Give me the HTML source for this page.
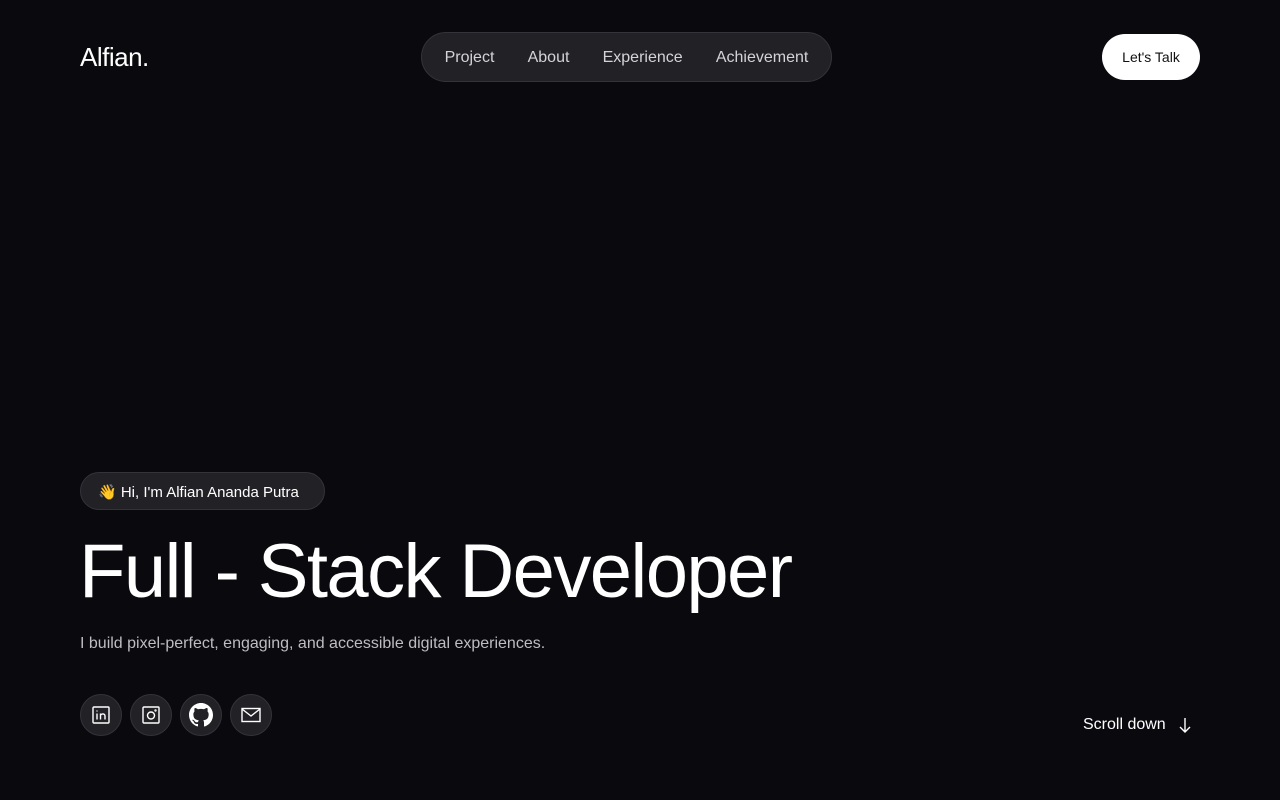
<!DOCTYPE html>
<html><head><meta charset="utf-8"><style>
*{margin:0;padding:0;box-sizing:border-box}
body{width:1280px;height:800px;background:#0a090e;font-family:"Liberation Sans",sans-serif;color:#fff;position:relative;overflow:hidden}
.logo{position:absolute;left:80px;top:42px;font-size:26px;letter-spacing:-0.5px}
.nav{position:absolute;left:421px;top:32px;width:411px;height:50px;border-radius:25px;background:#222126;border:1px solid #34333a;display:flex;align-items:center;justify-content:space-around;padding:2px 6px 0;font-size:16px;color:#d4d4d8}
.talk{position:absolute;left:1102px;top:34px;width:98px;height:46px;border-radius:23px;background:#fff;color:#111;font-size:14px;display:flex;align-items:center;justify-content:center}
.badge{position:absolute;left:80px;top:472px;width:245px;height:38px;border-radius:19px;background:#222126;border:1px solid #34333a;font-size:15px;display:flex;align-items:center;padding:2px 0 0 17px}
h1{position:absolute;left:79px;top:528px;font-size:76px;font-weight:400;letter-spacing:-1.6px;white-space:nowrap}
.sub{position:absolute;left:80px;top:635px;font-size:16px;color:#bdbdc2}
.icons{position:absolute;left:80px;top:694px;display:flex;gap:8px}
.icons div{width:42px;height:42px;border-radius:50%;background:#222126;border:1px solid #34333a;display:flex;align-items:center;justify-content:center}
.scroll{position:absolute;left:1083px;top:716px;font-size:16px;display:flex;align-items:center;gap:12px}
</style></head><body>
<div class="logo">Alfian.</div>
<div class="nav"><span>Project</span><span>About</span><span>Experience</span><span>Achievement</span></div>
<div class="talk">Let's Talk</div>
<div class="badge">👋 Hi, I'm Alfian Ananda Putra</div>
<h1>Full - Stack Developer</h1>
<div class="sub">I build pixel-perfect, engaging, and accessible digital experiences.</div>
<div class="icons">
<div><svg width="20" height="20" viewBox="0 0 20 20" fill="none" stroke="#fff" stroke-width="1.4"><rect x="2" y="2" width="16" height="16" rx="1"/><path d="M6 8.5v6M6 5.5v1M9.5 14.5v-6M9.5 11c0-2.5 4.5-3 4.5 0v3.5"/></svg></div>
<div><svg width="20" height="20" viewBox="0 0 20 20" fill="none" stroke="#fff" stroke-width="1.4"><rect x="2" y="2" width="16" height="16" rx="1"/><circle cx="10" cy="10.5" r="3.5"/><circle cx="14.5" cy="5.5" r=".5"/></svg></div>
<div><svg width="24" height="24" viewBox="0 0 16 16" fill="#fff"><path d="M8 0C3.58 0 0 3.58 0 8c0 3.54 2.29 6.53 5.47 7.59.4.07.55-.17.55-.38v-1.33c-2.23.48-2.7-1.07-2.7-1.07-.36-.92-.89-1.17-.89-1.17-.73-.5.06-.49.06-.49.8.06 1.23.83 1.23.83.71 1.22 1.87.87 2.33.66.07-.52.28-.87.5-1.07-1.78-.2-3.64-.89-3.64-3.95 0-.87.31-1.59.82-2.150-.08-.2-.36-1.02.08-2.12 0 0 .67-.21 2.2.82a7.6 7.6 0 0 1 4 0c1.53-1.04 2.2-.82 2.2-.82.44 1.1.16 1.92.08 2.12.51.56.82 1.27.82 2.15 0 3.07-1.87 3.75-3.65 3.95.29.25.54.73.54 1.48v2.2c0 .21.15.46.55.38A8 8 0 0 0 16 8c0-4.42-3.58-8-8-8z"/></svg></div>
<div><svg width="22" height="22" viewBox="0 0 22 22" fill="none" stroke="#fff" stroke-width="1.4"><rect x="2" y="4.5" width="18" height="13"/><path d="M2 5l9 7 9-7"/></svg></div>
</div>
<div class="scroll">Scroll down <svg width="14" height="16" viewBox="0 0 14 16" fill="none" stroke="#fff" stroke-width="1.4"><path d="M7 1v14M2 10l5 5 5-5"/></svg></div>
</body></html>
